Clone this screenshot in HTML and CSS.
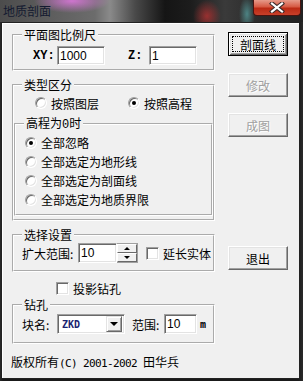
FILE: index.html
```html
<!DOCTYPE html>
<html lang="zh-CN">

<head>
    <meta charset="UTF-8">
    <meta name="viewport" content="width=device-width, initial-scale=1.0">
    <title>地质剖面</title>

    <link rel="stylesheet" href="styles.css">

</head>

<body>
    <div class="window">

        <div class="titlebar">
            <span class="title">地质剖面</span>
            <span class="close">
                <svg width="16" height="11" viewBox="0 0 16 11">
                    <path d="M3 1.5 L13 9.5 M13 1.5 L3 9.5" stroke="#3a2a2a" stroke-width="4.2" stroke-linecap="square" />
                    <path d="M3 1.5 L13 9.5 M13 1.5 L3 9.5" stroke="#ffffff" stroke-width="2.2" stroke-linecap="square" />
                </svg>
            </span>
        </div>

        <div class="client">
            <div class="columns">

                <div class="main">

                    <!-- масштаб -->
                    <fieldset class="group scale">
                        <legend>平面图比例尺</legend>
                        <div class="row">
                            <label class="tag xy" for="xy">XY:</label>
                            <input class="edit" id="xy" value="1000">
                            <label class="tag z" for="z">Z:</label>
                            <input class="edit" id="z" value="1">
                        </div>
                    </fieldset>

                    <fieldset class="group type">
                        <legend>类型区分</legend>
                        <div class="row radios">
                            <span class="opt wide"><span class="radio"></span>按照图层</span>
                            <span class="opt"><span class="radio on"></span>按照高程</span>
                        </div>

                        <fieldset class="group zero">
                            <legend>高程为<span class="half">0</span>时</legend>
                            <div class="opt line"><span class="radio on"></span>全部忽略</div>
                            <div class="opt line"><span class="radio"></span>全部选定为地形线</div>
                            <div class="opt line"><span class="radio"></span>全部选定为剖面线</div>
                            <div class="opt line"><span class="radio"></span>全部选定为地质界限</div>
                        </fieldset>
                    </fieldset>

                    <fieldset class="group select">
                        <legend>选择设置</legend>
                        <div class="row tall">
                            <label class="cap range" for="range">扩大范围:</label>
                            <input class="edit narrow" id="range" value="10">
                            <span class="spin">
                                <span class="up"></span>
                                <span class="down"></span>
                            </span>
                            <span class="check gap"></span>
                            <span class="after">延长实体</span>
                        </div>
                    </fieldset>

                    <div class="row project">
                        <span class="check"></span>
                        <span class="after">投影钻孔</span>
                    </div>

                    <fieldset class="group drill">
                        <legend>钻孔</legend>
                        <div class="row tall">
                            <span class="cap block">块名:</span>
                            <span class="combo">
                                <span class="value">ZKD</span>
                                <span class="drop"></span>
                            </span>
                            <label class="cap around" for="around">范围:</label>
                            <input class="edit small" id="around" value="10">
                            <span class="unit">m</span>
                        </div>
                    </fieldset>

                </div>

                <div class="side">
                    <button class="btn default"><span class="focus">剖面线</span></button>
                    <button class="btn off first">修改</button>
                    <button class="btn off second">成图</button>
                    <button class="btn quit">退出</button>
                </div>

            </div>

            <p class="copyright">版权所有<span class="mono">(C) 2001-2002 </span>田华兵</p>
        </div>

    </div>
</body>

</html>
```

FILE: styles.css
```css
* {
    box-sizing: border-box;
}

body {
    margin: 0;
    background: #1c1c1c;
    font-family: "Noto Sans CJK SC", sans-serif;
    font-size: 12px;
    color: #000;
}

.window {
    width: 303px;
    height: 381px;
    overflow: hidden;
    background: linear-gradient(90deg, #2a2a2a 0, #1a1a1a 3px, #1a1a1a 298px, #2a2a2a 303px);
}

/* заголовок окна */
.titlebar {
    height: 22px;
    display: flex;
    justify-content: space-between;
    align-items: flex-start;
    background:
        radial-gradient(ellipse 38px 12px at 72px 1px, rgba(225, 120, 225, 0.85), transparent),
        radial-gradient(ellipse 14px 16px at 207px 16px, rgba(190, 50, 50, 0.75), transparent),
        radial-gradient(ellipse 8px 18px at 247px 14px, rgba(100, 200, 200, 0.55), transparent),
        linear-gradient(90deg, #4c4c4c 0, #5a5a5a 40px, #6c6c6c 95px, #8a8a8a 110px, #4a4a4a 135px, #151515 165px, #1c1c1c 190px, #3a3a3a 225px, #2a2a2a 260px, #222 303px);
}

.title {
    margin: 5px 0 0 3px;
    line-height: 12px;
    color: #141a30;
}

.close {
    width: 48px;
    height: 16px;
    margin-right: 2px;
    border: 1px solid #4a1410;
    border-top: 0;
    border-radius: 0 0 4px 4px;
    background: linear-gradient(#e69a8a, #d65a44 45%, #bb2a14 55%, #c8402a);
    display: flex;
    justify-content: center;
    align-items: center;
}

/* клиентская область */
.client {
    margin-left: 1px;
    width: 299px;
    height: 357px;
    border: 1px solid #222;
    background: #f0f0f0;
    box-shadow: inset 1px 1px #fff;
    padding: 6px 0 0 10px;
}

.columns {
    display: flex;
    align-items: flex-start;
}

.main {
    width: 203px;
}

.side {
    margin-left: 13px;
    margin-top: 3px;
    display: flex;
    flex-direction: column;
}

.group {
    margin: 0;
    padding: 0;
    min-width: 0;
    border: 2px groove #fff;
}

.group legend {
    margin-left: 8px;
    padding: 0 2px;
    line-height: 12px;
}

.half {
    font-family: "Liberation Mono", monospace;
}

.row {
    display: flex;
    align-items: center;
}

.scale {
    padding: 5px 0 4px;
}

.scale .row {
    height: 19px;
    padding-left: 19px;
}

.tag {
    font-family: "Liberation Mono", monospace;
    font-weight: bold;
}

.xy {
    width: 24px;
}

.z {
    width: 21px;
    margin-left: 23px;
}

.edit {
    width: 48px;
    height: 19px;
    margin: 0;
    padding: 0 2px;
    font-family: "Liberation Sans", sans-serif;
    font-size: 12px;
    color: #000;
    background: #fff;
    border: 1px solid;
    border-color: #a0a0a0 #fff #fff #a0a0a0;
    box-shadow: inset 1px 1px #696969, inset -1px -1px #e3e3e3;
    outline: none;
}

.narrow {
    width: 39px;
    height: 20px;
}

.small {
    width: 33px;
    height: 20px;
}

.type {
    margin-top: 8px;
    padding: 6px 0 3px;
}

.radios {
    height: 12px;
    padding-left: 21px;
}

.opt {
    display: flex;
    align-items: center;
    gap: 4px;
}

.wide {
    width: 93px;
}

.radio {
    position: relative;
    width: 12px;
    height: 12px;
    flex: none;
    border-radius: 50%;
    background: #fff;
    border: 1px solid;
    border-color: #a0a0a0 #fff #fff #a0a0a0;
    box-shadow: inset 1px 1px #696969, inset -1px -1px #e3e3e3;
}

.radio.on::after {
    content: "";
    position: absolute;
    left: 3px;
    top: 3px;
    width: 4px;
    height: 4px;
    border-radius: 50%;
    background: #000;
}

.zero {
    margin-top: 8px;
    padding: 2px 0 5px;
}

.line {
    height: 19px;
    padding-left: 9px;
}

.select {
    margin-top: 8px;
    padding: 2px 0 7px;
}

.tall {
    height: 20px;
    padding-left: 8px;
}

.cap {
    flex: none;
}

.range {
    width: 56px;
}

.spin {
    width: 21px;
    height: 20px;
    display: flex;
    flex-direction: column;
    border: 1px solid #a0a0a0;
    border-left: 0;
}

.spin span {
    flex: 1;
    display: flex;
    justify-content: center;
    align-items: center;
    background: #f0f0f0;
    border: 1px solid;
    border-color: #fff #696969 #696969 #fff;
}

.up::before,
.down::before {
    content: "";
    border-left: 3px solid transparent;
    border-right: 3px solid transparent;
}

.up::before {
    border-bottom: 3px solid #000;
}

.down::before {
    border-top: 3px solid #000;
}

.check {
    width: 13px;
    height: 13px;
    flex: none;
    background: #fff;
    border: 1px solid;
    border-color: #a0a0a0 #fff #fff #a0a0a0;
    box-shadow: inset 1px 1px #696969, inset -1px -1px #e3e3e3;
}

.gap {
    margin-left: 8px;
}

.after {
    margin-left: 4px;
}

.project {
    height: 13px;
    margin-top: 10px;
    padding-left: 44px;
}

.drill {
    margin-top: 4px;
    padding: 3px 0 8px;
}

.block {
    width: 35px;
}

.combo {
    width: 68px;
    height: 20px;
    flex: none;
    display: flex;
    align-items: center;
    padding: 2px;
    background: #fff;
    border: 1px solid;
    border-color: #a0a0a0 #fff #fff #a0a0a0;
    box-shadow: inset 1px 1px #696969, inset -1px -1px #e3e3e3;
}

.value {
    flex: 1;
    padding-left: 2px;
    font-family: "DejaVu Sans Mono", monospace;
    font-size: 10px;
    font-weight: bold;
    color: #1a2470;
}

.drop {
    width: 16px;
    height: 16px;
    display: flex;
    justify-content: center;
    align-items: center;
    background: #f0f0f0;
    border: 1px solid;
    border-color: #e3e3e3 #696969 #696969 #e3e3e3;
    box-shadow: inset 1px 1px #fff, inset -1px -1px #a0a0a0;
}

.drop::before {
    content: "";
    border-left: 4px solid transparent;
    border-right: 4px solid transparent;
    border-top: 4px solid #000;
}

.around {
    width: 32px;
    margin-left: 7px;
}

.unit {
    margin-left: 3px;
    font-family: "DejaVu Sans Mono", monospace;
    font-size: 10px;
    font-weight: bold;
}

/* кнопки справа */
.btn {
    width: 60px;
    height: 24px;
    margin: 0;
    padding: 0;
    font-family: "Noto Sans CJK SC", sans-serif;
    font-size: 12px;
    color: #000;
    background: #f0f0f0;
    border: 1px solid;
    border-color: #fff #696969 #696969 #fff;
    box-shadow: inset -1px -1px #a0a0a0, inset 1px 1px #e3e3e3;
    display: flex;
    justify-content: center;
    align-items: center;
}

.default {
    border: 1px solid #000;
    box-shadow: inset 1px 1px #fff, inset -1px -1px #696969, inset 2px 2px #e3e3e3, inset -2px -2px #a0a0a0;
    padding: 3px;
}

.focus {
    flex: 1;
    align-self: stretch;
    display: flex;
    justify-content: center;
    align-items: center;
    border: 1px dotted #000;
}

.off {
    color: #a0a0a0;
    text-shadow: 1px 1px #fff;
}

.first {
    margin-top: 17px;
}

.second {
    margin-top: 16px;
}

.quit {
    margin-top: 109px;
}

.copyright {
    margin: 12px 0 0 -1px;
    line-height: 12px;
}

.mono {
    font-family: "DejaVu Sans Mono", monospace;
    font-size: 11px;
    letter-spacing: -0.62px;
}
```
